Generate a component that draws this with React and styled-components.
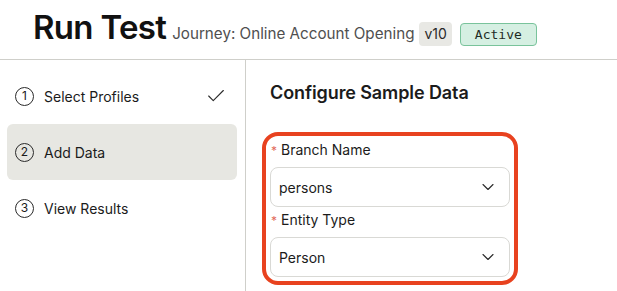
import styled, { createGlobalStyle } from "styled-components";
import { Check, ChevronDown } from "lucide-react";

const GlobalStyle = createGlobalStyle`
  html, body {
    margin: 0;
    padding: 0;
    background: #fff;
  }
  body {
    font-family: "Inter", "Noto Sans", sans-serif;
    color: #1b1b1b;
  }
  #root {
    min-height: 100vh;
  }
`;

const Page = styled.div`
  display: flex;
  flex-direction: column;
  min-height: 100vh;
`;

const Header = styled.header`
  display: flex;
  align-items: baseline;
  height: 60px;
  box-sizing: border-box;
  padding: 11px 0 0 33px;
  border-bottom: 1px solid #cfcfca;
`;

const Title = styled.h1`
  margin: 0;
  font-size: 33px;
  line-height: 1;
  font-weight: 600;
  letter-spacing: -0.7px;
  color: #111;
`;

const Journey = styled.span`
  margin-left: 6px;
  font-size: 15.2px;
  color: #4f4f4f;
`;

const Version = styled.span`
  margin-left: 5px;
  padding: 4px 5px;
  font-size: 14px;
  line-height: 16px;
  border-radius: 4px;
  background: #e8e8e4;
  color: #2a2a2a;
`;

const Status = styled.span`
  margin-left: 8px;
  padding: 3px 14px;
  font-family: "DejaVu Sans Mono", "Liberation Mono", monospace;
  font-size: 13px;
  line-height: 15px;
  border-radius: 4px;
  border: 1px solid #79c39b;
  background: #d5efe2;
  color: #1e2b24;
`;

const Body = styled.div`
  display: flex;
  flex: 1;
`;

const Sidebar = styled.nav`
  width: 246px;
  box-sizing: border-box;
  padding: 8px 8px 8px 7px;
  border-right: 1px solid #cfcfca;
  display: flex;
  flex-direction: column;
`;

const Step = styled.div`
  display: flex;
  align-items: center;
  height: 56px;
  padding: 0 10px 0 8px;
  border-radius: 6px;
  background: ${(p) => (p.$active ? "#e7e7e2" : "transparent")};
  font-size: 14px;
  color: #1b1b1b;
`;

const StepNumber = styled.span`
  width: 17px;
  height: 17px;
  border: 1px solid #2a2a2a;
  border-radius: 50%;
  display: flex;
  align-items: center;
  justify-content: center;
  font-size: 12px;
  line-height: 1;
  margin-right: 10px;
`;

const StepLabel = styled.span`
  flex: 1;
`;

const Main = styled.main`
  flex: 1;
  padding: 21px 24px 0;
`;

const SectionTitle = styled.h2`
  margin: 0 0 35px;
  font-size: 18px;
  line-height: 24px;
  font-weight: 600;
  letter-spacing: -0.1px;
  color: #1b1b1b;
`;

const Form = styled.div`
  width: 240px;
  border-radius: 8px;
  outline: ${(p) => (p.$highlight ? "4px solid #e8421f" : "none")};
  outline-offset: 4px;
`;

const Field = styled.div`
  display: flex;
  flex-direction: column;
  & + & {
    margin-top: 3px;
  }
`;

const Label = styled.label`
  font-size: 14px;
  line-height: 20px;
  margin-bottom: 6px;
  padding-left: 1px;
  color: #1b1b1b;
`;

const Required = styled.span`
  color: #e26a5c;
  font-size: 12px;
  margin-right: 4px;
`;

const Select = styled.div`
  height: 40px;
  box-sizing: border-box;
  display: flex;
  align-items: center;
  justify-content: space-between;
  padding: 0 11px 0 8px;
  border: 1px solid #d9d9d5;
  border-radius: 8px;
  background: #fff;
  font-size: 14px;
  color: #1b1b1b;
`;

const steps = [
  { n: 1, label: "Select Profiles", done: true },
  { n: 2, label: "Add Data", active: true },
  { n: 3, label: "View Results" },
];

const fields = [
  { label: "Branch Name", value: "persons" },
  { label: "Entity Type", value: "Person" },
];

export default function App() {
  return (
    <Page>
      <GlobalStyle />
      <Header>
        <Title>Run Test</Title>
        <Journey>Journey: Online Account Opening</Journey>
        <Version>v10</Version>
        <Status>Active</Status>
      </Header>
      <Body>
        <Sidebar>
          {steps.map((s) => (
            <Step key={s.n} $active={s.active}>
              <StepNumber>{s.n}</StepNumber>
              <StepLabel>{s.label}</StepLabel>
              {s.done && <Check size={22} strokeWidth={1.2} color="#2a2a2a" />}
            </Step>
          ))}
        </Sidebar>
        <Main>
          <SectionTitle>Configure Sample Data</SectionTitle>
          <Form $highlight>
            {fields.map((f) => (
              <Field key={f.label}>
                <Label>
                  <Required>*</Required>
                  {f.label}
                </Label>
                <Select>
                  <span>{f.value}</span>
                  <ChevronDown size={20} strokeWidth={1.3} color="#2a2a2a" />
                </Select>
              </Field>
            ))}
          </Form>
        </Main>
      </Body>
    </Page>
  );
}
